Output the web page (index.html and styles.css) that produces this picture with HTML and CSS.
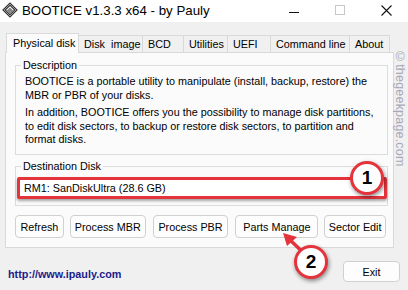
FILE: index.html
```html
<!DOCTYPE html>
<html lang="en">
<head>
    <meta charset="UTF-8">
    <title>BOOTICE v1.3.3 x64 - by Pauly</title>
    <link rel="stylesheet" href="styles.css">
</head>
<body>
<div class="window">

    <!-- Barra de titulo -->
    <div class="titlebar">
        <svg class="app-icon" width="16" height="16" viewBox="0 0 16 16">
            <path d="M1 8 L8 1 L15 8 L8 15 Z" fill="#d8d8d8" stroke="#333" stroke-width="1.2"/>
            <path d="M3 8 L8 3 L13 8 L8 13 Z" fill="#8a8a8a" stroke="#222" stroke-width="0.8"/>
            <path d="M5 8 L8 5 L11 8" fill="none" stroke="#eee" stroke-width="1"/>
        </svg>
        <span class="title">BOOTICE v1.3.3 x64 - by Pauly</span>
        <div class="controls">
            <span class="ctl-min"></span>
            <span class="ctl-max"></span>
            <svg class="ctl-close" width="11" height="11" viewBox="0 0 11 11">
                <path d="M0.5 0.5 L10.5 10.5 M10.5 0.5 L0.5 10.5" stroke="#111" stroke-width="1.1"/>
            </svg>
        </div>
    </div>

    <div class="content">
        <!-- Abas -->
        <div class="tabs">
            <div class="tab active" style="width:73px">Physical disk</div>
            <div class="tab" style="width:64px">Disk&nbsp; image</div>
            <div class="tab" style="width:41px">BCD</div>
            <div class="tab" style="width:44px">Utilities</div>
            <div class="tab" style="width:43px">UEFI</div>
            <div class="tab" style="width:79px">Command line</div>
            <div class="tab" style="width:40px">About</div>
        </div>

        <div class="panel">
            <div class="group desc">
                <span class="legend">Description</span>
                <p>BOOTICE is a portable utility to manipulate (install, backup, restore) the<br>MBR or PBR of your disks.</p>
                <p>In addition, BOOTICE offers you the possibility to manage disk partitions,<br>to edit disk sectors, to backup or restore disk sectors, to partition and<br>format disks.</p>
            </div>

            <div class="group dest">
                <span class="legend">Destination Disk</span>
                <div class="combo">RM1: SanDiskUltra (28.6 GB)</div>
            </div>

            <div class="actions">
                <button class="btn" style="width:49px">Refresh</button>
                <button class="btn" style="width:76px">Process MBR</button>
                <button class="btn wide-gap" style="width:76px">Process PBR</button>
                <button class="btn wide-gap" style="width:83px">Parts Manage</button>
                <button class="btn" style="width:62px">Sector Edit</button>
            </div>
        </div>

        <div class="footer">
            <a class="site" href="#">http://www.ipauly.com</a>
            <button class="btn exit">Exit</button>
        </div>
    </div>

    <!-- Anotacoes -->
    <div class="watermark">©thegeekpage.com</div>
    <div class="badge b1">1</div>
    <svg class="arrow" width="40" height="36" viewBox="0 0 40 36">
        <path d="M28 26 L9 8" stroke="#e5333c" stroke-width="3.5" stroke-linecap="round"/>
        <path d="M2 1 L16 5 L6 14 Z" fill="#e5333c"/>
    </svg>
    <div class="badge b2">2</div>
</div>
</body>
</html>
```

FILE: styles.css
```css
/* Janela principal */
body {
    margin: 0;
    padding: 0;
    width: 408px;
    height: 290px;
    overflow: hidden;
    font-family: "Liberation Sans", Arial, sans-serif;
    font-size: 10.8px;
    color: #000;
}

.window {
    position: relative;
    width: 408px;
    height: 290px;
    background-color: #f0f0f0;
    display: flex;
    flex-direction: column;
}

/* Barra de titulo */
.titlebar {
    height: 22px;
    background-color: #fff;
    display: flex;
    align-items: center;
    flex-shrink: 0;
}

.app-icon {
    margin-left: 2px;
    margin-top: -2px;
}

.title {
    margin-left: 4px;
    font-size: 13.3px;
    margin-top: -1px;
}

.controls {
    margin-left: auto;
    display: flex;
    align-items: center;
}

.ctl-min {
    width: 10px;
    height: 1px;
    background-color: #111;
    margin-right: 36px;
    margin-top: 2px;
}

.ctl-max {
    width: 8px;
    height: 8px;
    border: 1px solid #c8c8c8;
    margin-right: 36px;
    margin-top: -3px;
}

.ctl-close {
    margin-right: 16px;
    margin-top: -2px;
}

/* Area de conteudo */
.content {
    padding: 10px 0 0 6px;
    display: flex;
    flex-direction: column;
}

.tabs {
    display: flex;
    align-items: flex-end;
    height: 20px;
}

.tab {
    box-sizing: border-box;
    height: 17px;
    border: 1px solid #d9d9d9;
    border-bottom: none;
    border-left: none;
    background-color: #f0f0f0;
    padding-left: 5px;
    line-height: 16px;
    white-space: nowrap;
}

.tab.active {
    height: 20px;
    background-color: #fbfbfb;
    border-left: 1px solid #d9d9d9;
    padding-left: 6px;
    line-height: 19px;
    margin-bottom: -1px;
    position: relative;
    z-index: 1;
}

.panel {
    width: 389px;
    height: 196px;
    box-sizing: border-box;
    border: 1px solid #d9d9d9;
    background-color: #fbfbfb;
    padding: 12px 7px 0 9px;
    margin-left: -1px;
}

/* Caixas de grupo */
.group {
    position: relative;
    border: 1px solid #dcdcdc;
    box-sizing: border-box;
    width: 373px;
}

.legend {
    position: absolute;
    top: -7px;
    left: 5px;
    padding: 0 2px;
    background-color: #fbfbfb;
    line-height: 13px;
}

.desc {
    height: 90px;
    padding: 9px 0 0 9px;
}

.desc p {
    margin: 0 0 4px 0;
    line-height: 13.5px;
    white-space: nowrap;
}

.dest {
    height: 40px;
    margin-top: 11px;
    padding: 10px 0 0 1px;
}

.combo {
    box-sizing: border-box;
    width: 370px;
    height: 22px;
    border: 3px solid #e5333c;
    border-radius: 2px;
    background-color: #fff;
    padding-left: 4px;
    line-height: 16px;
    box-shadow: 0 2px 3px rgba(0, 0, 0, 0.35);
}

/* Botoes */
.actions {
    display: flex;
    margin-top: 9px;
    gap: 6px;
}

.btn {
    box-sizing: border-box;
    height: 23px;
    border: 1px solid #d0d0d0;
    border-radius: 4px;
    background-color: #fdfdfd;
    font-family: "Liberation Sans", Arial, sans-serif;
    font-size: 10.8px;
    color: #000;
    padding: 0;
}

.actions .wide-gap {
    margin-left: 1px;
}

.footer {
    display: flex;
    align-items: center;
    margin-top: 13px;
    padding-right: 8px;
}

.site {
    margin-left: 2px;
    margin-top: 5px;
    font-weight: bold;
    color: #1c1c8c;
    text-decoration: none;
}

.exit {
    margin-left: auto;
    width: 57px;
    height: 21px;
}

/* Anotacoes sobrepostas */
.watermark {
    position: absolute;
    left: 393px;
    top: 50px;
    writing-mode: vertical-rl;
    font-size: 12.5px;
    color: #a8a8b8;
    letter-spacing: 0.2px;
}

.badge {
    position: absolute;
    width: 28px;
    height: 28px;
    border: 3px solid #e5333c;
    border-radius: 50%;
    background-color: #fff;
    text-align: center;
    line-height: 28px;
    font-size: 19px;
    font-weight: bold;
    box-shadow: 1px 2px 4px rgba(0, 0, 0, 0.45);
}

.b1 {
    left: 350px;
    top: 161px;
}

.b2 {
    left: 294px;
    top: 245px;
}

.arrow {
    position: absolute;
    left: 281px;
    top: 232px;
}
```
